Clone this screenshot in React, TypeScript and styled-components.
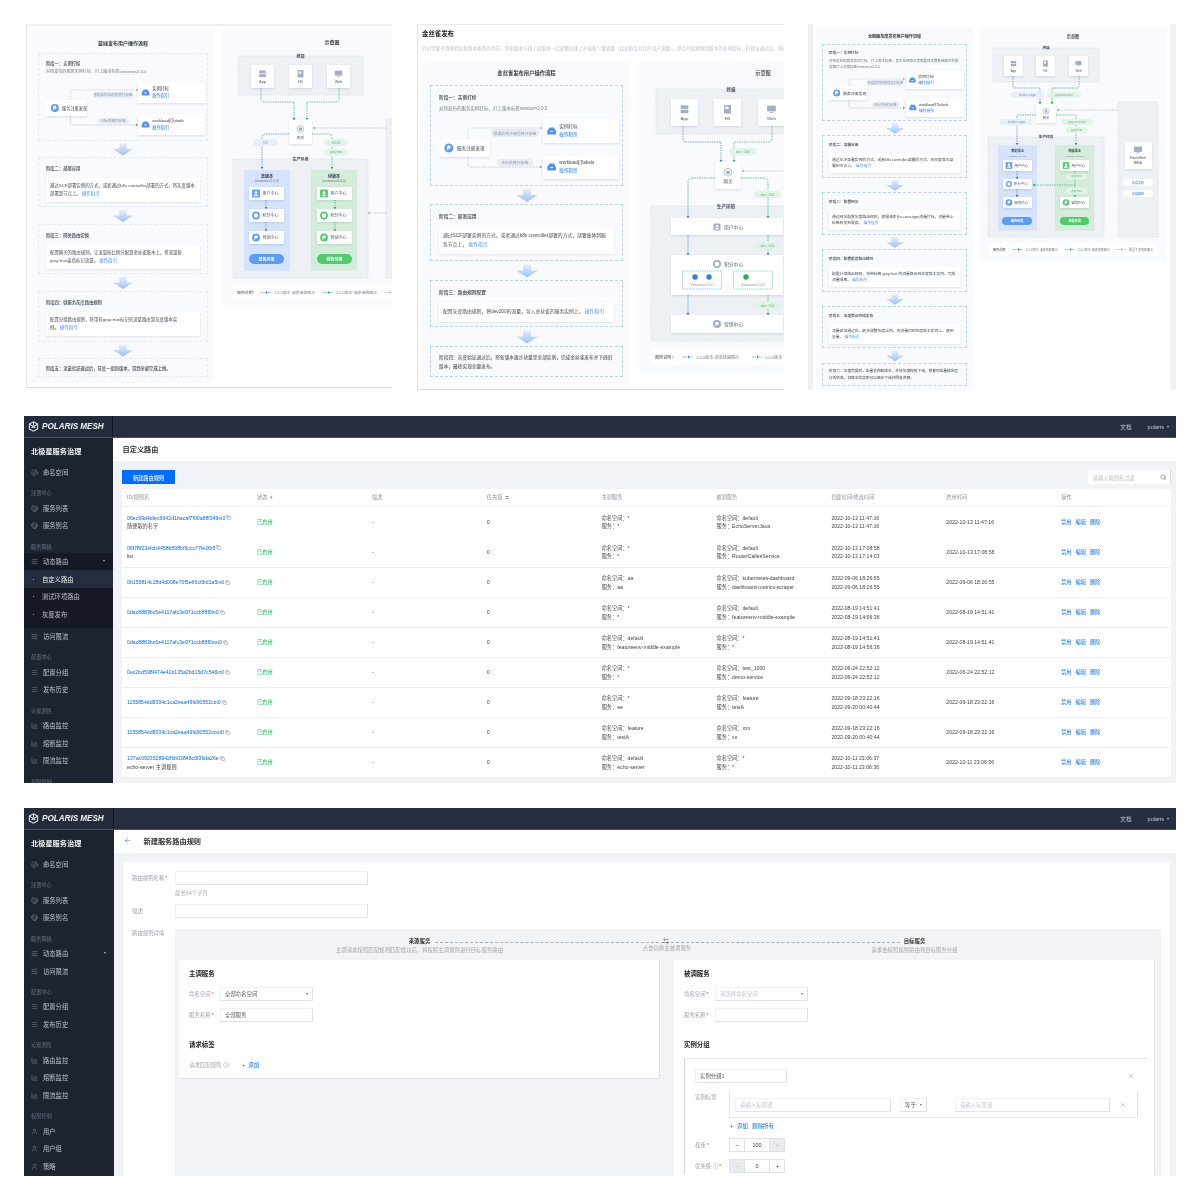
import React from "react";
import styled, { createGlobalStyle } from "styled-components";
import {
  ArrowLeft, ChartArea, Compass, Copy, Earth, Info, Menu, Minus, Plus, Search,
  SlidersHorizontal, User, X,
} from "lucide-react";

const FONT = `"Liberation Sans", "Noto Sans CJK SC", sans-serif`;
const BLUE = "#2f7df6";
const GREEN = "#1fb25b";
const GREY = "#aab4c6";

const GlobalStyle = createGlobalStyle`
  html, body { margin: 0; padding: 0; background: #fff; }
  body { font-family: ${FONT}; color: #333; }
  * { box-sizing: border-box; }
`;

const Page = styled.div`
  width: 1200px;
  padding: 24px 24px 0;
  display: grid;
  grid-template-rows: 367px 367px 368px;
  row-gap: 25px;
`;

const DocRow = styled.div`
  display: grid;
  grid-template-columns: repeat(3, 368px);
  column-gap: 24px;
  height: 366px;
`;

/* ---------- small drawing helpers used inside the diagrams ---------- */

const DiagramSvg = styled.svg`
  display: block;
  flex: none;
`;
const DiagramText = styled.text`
  font-family: ${FONT};
  dominant-baseline: central;
`;
const Raised = styled.rect`
  fill: #fff;
  filter: drop-shadow(0 1px 1.2px rgba(70, 90, 130, 0.18));
`;

type TProps = { x: number; y: number; s?: number; c?: string; w?: number; a?: "start" | "middle" | "end"; children: React.ReactNode };
const T = ({ x, y, s = 4, c = "#4f5866", w = 400, a = "start", children }: TProps) => (
  <DiagramText x={x} y={y} fontSize={s} fill={c} fontWeight={w} textAnchor={a}>{children}</DiagramText>
);

type WireProps = { d: string; c?: string; tip?: [number, number, "d" | "u" | "l" | "r"]; sw?: number };
const Wire = ({ d, c = BLUE, tip, sw = 0.7 }: WireProps) => {
  let head = "";
  if (tip) {
    const [x, y, dir] = tip;
    if (dir === "d") head = `${x - 1.5},${y - 2} ${x + 1.5},${y - 2} ${x},${y}`;
    if (dir === "u") head = `${x - 1.5},${y + 2} ${x + 1.5},${y + 2} ${x},${y}`;
    if (dir === "l") head = `${x + 2},${y - 1.5} ${x + 2},${y + 1.5} ${x},${y}`;
    if (dir === "r") head = `${x - 2},${y - 1.5} ${x - 2},${y + 1.5} ${x},${y}`;
  }
  return (
    <g>
      <path d={d} fill="none" stroke={c} strokeWidth={sw} strokeDasharray="1.4 1" />
      {tip && <polygon points={head} fill={c} />}
    </g>
  );
};

type GlyphKind = "app" | "h5" | "web" | "gw" | "user" | "ring" | "p" | "box" | "r";
const Glyph = ({ kind, x, y, s, c }: { kind: GlyphKind; x: number; y: number; s: number; c: string }) => (
  <g transform={`translate(${x - s / 2} ${y - s / 2}) scale(${s / 10})`}>
    {kind === "app" && (<><rect x="0.5" y="0.5" width="9" height="4" fill={c} /><rect x="0.5" y="5.5" width="9" height="4" fill={c} /></>)}
    {kind === "h5" && (<><rect x="1" y="0" width="8" height="10" fill={c} /><rect x="2.5" y="1.8" width="3.6" height="3" fill="#fff" /></>)}
    {kind === "web" && (<><rect x="0" y="0.8" width="10" height="6.6" fill={c} /><rect x="3" y="8" width="4" height="1.2" fill={c} /></>)}
    {kind === "gw" && (<><circle cx="5" cy="5" r="4.6" fill="none" stroke={c} strokeWidth="1" /><rect x="3" y="2.8" width="4" height="4.4" rx="0.8" fill={c} /></>)}
    {kind === "user" && (<><rect width="10" height="10" fill={c} /><circle cx="5" cy="3.8" r="1.8" fill="#fff" /><rect x="2.3" y="6.4" width="5.4" height="2" fill="#fff" /></>)}
    {kind === "ring" && (<><circle cx="5" cy="5" r="5" fill={c} /><circle cx="5" cy="5" r="2.8" fill="#fff" /></>)}
    {kind === "p" && (<><circle cx="5" cy="5" r="5" fill={c} /><rect x="3" y="2.5" width="4.2" height="3.4" rx="1.2" fill="#fff" /><rect x="3" y="5" width="1.2" height="2.8" fill="#fff" /></>)}
    {kind === "box" && (<><path d="M2.5 1 H7.5 L10 5 V9 H0 V5 Z" fill={c} /><rect x="3.2" y="5" width="3.6" height="1.2" fill="#fff" /></>)}
    {kind === "r" && (<><circle cx="5" cy="5" r="5" fill={c} /><circle cx="5" cy="4" r="2" fill="#fff" /><rect x="3" y="4" width="1.2" height="3.6" fill="#fff" /></>)}
  </g>
);

type TermBox = { x: number; y: number; w: number; h: number; kind: GlyphKind; label: string };
const TermNode = ({ n, s, c = "#a3aec2" }: { n: TermBox; s: number; c?: string }) => (
  <g>
    <Raised x={n.x} y={n.y} width={n.w} height={n.h} />
    <Glyph kind={n.kind} x={n.x + n.w / 2} y={n.y + n.h * 0.38} s={n.w * 0.32} c={c} />
    <T x={n.x + n.w / 2} y={n.y + n.h * 0.74} s={s} a="middle">{n.label}</T>
  </g>
);

const SvcRow = ({ x, y, w, h, kind, c, label, s, ix }: { x: number; y: number; w: number; h: number; kind: GlyphKind; c: string; label: string; s: number; ix: number }) => (
  <g>
    <Raised x={x} y={y} width={w} height={h} />
    <Glyph kind={kind} x={x + ix} y={y + h / 2} s={h * 0.6} c={c} />
    <T x={x + ix + h * 0.5} y={y + h / 2} s={s}>{label}</T>
  </g>
);

const Pill = ({ x, y, w, h, c, s, children }: { x: number; y: number; w: number; h: number; c: "blue" | "green" | "grey"; s: number; children: React.ReactNode }) => {
  const fill = { blue: "#e7effc", green: "#e2f4e8", grey: "#e6ebf4" }[c];
  const ink = { blue: "#6f93c9", green: "#6bb184", grey: "#8f9bb2" }[c];
  return (
    <g>
      <rect x={x} y={y} width={w} height={h} rx={h / 2} fill={fill} />
      <T x={x + w / 2} y={y + h / 2} s={s} c={ink} a="middle">{children}</T>
    </g>
  );
};

const Zone = ({ x, y, w, h, label, s = 4 }: { x: number; y: number; w: number; h: number; label?: string; s?: number }) => (
  <g>
    <rect x={x} y={y} width={w} height={h} fill="#edf1f5" stroke="#c9d1dd" strokeWidth="0.5" strokeDasharray="1.6 1.2" />
    {label && (<T x={x + w / 2} y={y} s={s} c="#444c5a" w={700} a="middle">{label}</T>)}
  </g>
);

const EnvColumn = ({ x, y, w, h, c, title, sub, s }: { x: number; y: number; w: number; h: number; c: "blue" | "green"; title: string; sub: string; s: number }) => (
  <g>
    <rect x={x} y={y} width={w} height={h} fill={c === "blue" ? "#d5e4fc" : "#d3edda"} />
    <T x={x + w / 2} y={y + 6} s={s} c="#39424f" w={700} a="middle">{title}</T>
    <T x={x + w / 2} y={y + 11} s={s - 0.7} c="#6c7685" a="middle">{sub}</T>
  </g>
);

const EnvButton = ({ x, y, w, h, c, s, children }: { x: number; y: number; w: number; h: number; c: string; s: number; children: React.ReactNode }) => (
  <g>
    <rect x={x} y={y} width={w} height={h} rx={h / 2} fill={c} />
    <T x={x + w / 2} y={y + h / 2} s={s} c="#fff" w={700} a="middle">{children}</T>
  </g>
);

const Legend = ({ x, y, w, h, s, stops, text }: { x: number; y: number; w: number; h: number; s: number; stops: number[]; text: string[] }) => {
  const cy = y + h / 2;
  const colors = [BLUE, GREEN, GREY];
  return (
    <g>
      <rect x={x} y={y} width={w} height={h} fill="#fff" />
      <T x={x + 4} y={cy} s={s} c="#444c5a">图例说明：</T>
      {stops.map((sx, i) => (
        <g key={sx}>
          <Wire d={`M${sx} ${cy} H${sx + 10}`} c={colors[i]} tip={[sx + 7, cy, "r"]} />
          <T x={sx + 13} y={cy} s={s} c="#7a8494">{text[i]}</T>
        </g>
      ))}
    </g>
  );
};

/* ---------- the three document screenshots ---------- */

const DocShot = styled.div<{ $kind: "a" | "b" | "c" }>`
  height: 366px;
  overflow: hidden;
  background: #fff;
  filter: blur(0.3px);
  ${(p) => p.$kind === "a" && `
    padding: 0 0 2px 2px;
  `}
  ${(p) => p.$kind === "b" && `
    padding: 0 0 0 1px;
  `}
  ${(p) => p.$kind === "c" && `
    background: #f0f1f5;
    padding: 0 6px 0 5px;
  `}
`;
const DocFrame = styled.div<{ $kind: "a" | "b" | "c" }>`
  height: 100%;
  background: #fff;
  overflow: hidden;
  ${(p) => p.$kind === "a" && `
    border-top: 2px solid #eef0f4;
    border-left: 1px solid #e3e6ec;
    border-bottom: 1px solid #d8dbe3;
    padding: 5px 0 0 4px;
  `}
  ${(p) => p.$kind === "b" && `
    border-top: 1px solid #e8eaf0;
    border-left: 1px solid #dfe2e9;
    border-bottom: 1px solid #d8dbe3;
    padding: 5px 0 0 4px;
  `}
  ${(p) => p.$kind === "c" && `
    padding: 3px 0 0 3px;
  `}
`;
const DocTitle = styled.div`
  font-size: 6.4px;
  line-height: 8px;
  font-weight: 700;
  color: #222;
`;
const DocIntro = styled.div`
  font-size: 4.6px;
  line-height: 8px;
  color: #bcc2cc;
  margin: 7px 0 8px;
  white-space: nowrap;
`;
const DocColumns = styled.div<{ $gap: number }>`
  display: flex;
  align-items: flex-start;
  gap: ${(p) => p.$gap}px;
`;
const FlowPanel = styled.div<{ $w: number; $h: number; $pad: number }>`
  width: ${(p) => p.$w}px;
  height: ${(p) => p.$h}px;
  flex: none;
  background: #f8fafe;
  padding: 0 ${(p) => p.$pad}px;
  overflow: hidden;
`;
const DiagramPanel = styled.div`
  flex: none;
  background: #f8fafe;
`;
const PanelTitle = styled.div<{ $h: number; $s: number }>`
  height: ${(p) => p.$h}px;
  display: flex;
  align-items: center;
  justify-content: center;
  font-size: ${(p) => p.$s}px;
  font-weight: 700;
  color: #30363f;
  white-space: nowrap;
`;
const Stage = styled.div<{ $h: number; $inset: number; $line: string }>`
  height: ${(p) => p.$h}px;
  border: 0.6px dashed ${(p) => p.$line};
  padding: 0 ${(p) => p.$inset}px;
  overflow: hidden;
`;
const StageTitle = styled.div<{ $h: number; $s: number }>`
  height: ${(p) => p.$h}px;
  display: flex;
  align-items: center;
  font-size: ${(p) => p.$s}px;
  color: #39404b;
  font-weight: 500;
  white-space: nowrap;
`;
const StageNote = styled.div<{ $s: number; $lh: number }>`
  height: 100%;
  display: flex;
  align-items: center;
  font-size: ${(p) => p.$s}px;
  line-height: ${(p) => p.$lh}px;
  color: #39404b;
`;
const StageDesc = styled.div<{ $s: number; $lh: number; $mt: number }>`
  font-size: ${(p) => p.$s}px;
  line-height: ${(p) => p.$lh}px;
  margin-top: ${(p) => p.$mt}px;
  color: #727b89;
`;
const StageCard = styled.div<{ $s: number; $lh: number; $py: number; $px: number }>`
  background: #fff;
  box-shadow: 0 1px 2px rgba(70, 90, 130, 0.14);
  padding: ${(p) => p.$py}px ${(p) => p.$px}px;
  font-size: ${(p) => p.$s}px;
  line-height: ${(p) => p.$lh}px;
  color: #424953;
`;
const GuideLink = styled.span`
  color: #3f8cf7;
  white-space: nowrap;
`;
const DownArrow = styled.svg<{ $h: number }>`
  display: block;
  margin: 0 auto;
  height: ${(p) => p.$h}px;
`;

const FlowArrow = ({ h, w }: { h: number; w: number }) => (
  <DownArrow $h={h} width={w} viewBox="0 0 24 16">
    <defs>
      <linearGradient id="flowArrowFill" x1="0" y1="0" x2="0" y2="1">
        <stop offset="0" stopColor="#e6eefc" />
        <stop offset="1" stopColor="#9fc0f8" />
      </linearGradient>
    </defs>
    <path d="M8 2 H16 V8 H23 L12 15 L1 8 H8 Z" fill="url(#flowArrowFill)" />
  </DownArrow>
);

type MiniGeo = {
  view: [number, number, number, number];
  node: [number, number, number, number];
  boxes: [number, number, number, number][];
  wireX: number; topY: number; botY: number; boxX: number;
  pills: [number, number, number, number][];
  s: number;
  labels: [string, string];
};
const MiniFlow = ({ g }: { g: MiniGeo }) => {
  const [nx, ny, nw, nh] = g.node;
  return (
    <DiagramSvg width={g.view[2]} height={g.view[3]} viewBox={g.view.join(" ")}>
      <Wire d={`M${g.wireX} ${ny} V${g.topY + 2} Q${g.wireX} ${g.topY} ${g.wireX + 2} ${g.topY} H${g.boxX}`} c={GREY} tip={[g.boxX, g.topY, "r"]} sw={0.5} />
      <Wire d={`M${g.wireX} ${ny + nh} V${g.botY - 2} Q${g.wireX} ${g.botY} ${g.wireX + 2} ${g.botY} H${g.boxX}`} c="#8d97aa" tip={[g.boxX, g.botY, "r"]} sw={0.5} />
      <Raised x={nx} y={ny} width={nw} height={nh} />
      <Glyph kind="r" x={nx + nh * 0.55} y={ny + nh / 2} s={nh * 0.5} c="#5f9df8" />
      <T x={nx + nh} y={ny + nh / 2} s={g.s} c="#3d4450">服务注册发现</T>
      {g.pills.map(([x, y, w, h], i) => (
        <Pill key={x} x={x} y={y} w={w} h={h} c="grey" s={g.s * 0.85}>{i === 0 ? "根据实例注册信息打标签" : "K8s资源打标签"}</Pill>
      ))}
      {g.boxes.map(([x, y, w, h], i) => (
        <g key={y}>
          <Raised x={x} y={y} width={w} height={h} />
          <Glyph kind="box" x={x + h * 0.36} y={y + h / 2} s={h * 0.36} c="#4e93f6" />
          <T x={x + h * 0.68} y={y + h * 0.33} s={g.s} c="#3d4450">{g.labels[i]}</T>
          <T x={x + h * 0.68} y={y + h * 0.66} s={g.s} c="#3f8cf7" w={500}>操作指引</T>
        </g>
      ))}
    </DiagramSvg>
  );
};

type StageData = { h: number; title: string; titleH?: number; desc?: string; descLh?: number; descMt?: number; mini?: MiniGeo; card?: string; noteLh?: number; };
type StagedFlowProps = { stages: StageData[]; gaps: number[]; pad: number; line: string; titleS: number; cardS: number; cardLh: number; cardPy: number; cardPx: number; titleH: number; arrowW: number };

const StagedFlow = ({ stages, gaps, pad, line, titleS, cardS, cardLh, cardPy, cardPx, titleH, arrowW }: StagedFlowProps) => (
  <>
    {stages.map((st, i) => (
      <React.Fragment key={st.title}>
        <Stage $h={st.h} $inset={pad} $line={line}>
          {st.noteLh ? (
            <StageNote $s={titleS} $lh={st.noteLh}>{st.title}</StageNote>
          ) : (
            <StageTitle $h={st.titleH ?? titleH} $s={titleS}>{st.title}</StageTitle>
          )}
          {st.desc && <StageDesc $s={cardS - 0.3} $lh={st.descLh ?? cardLh} $mt={st.descMt ?? 0}>{st.desc}</StageDesc>}
          {st.mini && <MiniFlow g={st.mini} />}
          {st.card && (
            <StageCard $s={cardS} $lh={cardLh} $py={cardPy} $px={cardPx}>
              {st.card}<GuideLink> 操作指引</GuideLink>
            </StageCard>
          )}
        </Stage>
        {i < stages.length - 1 && <FlowArrow h={gaps[i]} w={arrowW} />}
      </React.Fragment>
    ))}
  </>
);

const blueGreenStages: StageData[] = [
  {
    h: 88, title: "阶段一：实例打标", titleH: 17, desc: "对待发布的服务实例打标，打上版本标签version=v2.0.0", descLh: 6, descMt: -2,
    mini: {
      view: [45, 74, 160, 65], node: [45, 99, 41, 16], boxes: [[137, 81, 67, 21], [137, 113, 67, 21]],
      wireX: 69.5, topY: 89, botY: 124, boxX: 137, pills: [[92, 91, 40, 6], [97, 117, 31, 6]], s: 4.2,
      labels: ["实例打标", "workload打labels"],
    },
  },
  { h: 50, title: "阶段二：部署应用", card: "通过SCF部署实例的方式，或者通过k8s controller部署的方式，将灰度版本部署到节点上。" },
  { h: 50, title: "阶段三：网关路由切换", card: "配置网关的路由规则，让流量按比例分配到金丝雀版本上，将流量按gray:true染色标记流量。" },
  { h: 51, title: "阶段四：微服务灰度路由规则", card: "配置分组路由规则，将带有gray:true标记的流量路由到灰度版本实例。" },
  { h: 19, title: "阶段五：流量验证通过后，灰度一组新版本，直到全部完成上线。", titleH: 18 },
];

const canaryStages: StageData[] = [
  {
    h: 101, title: "阶段一：实例打标", desc: "对待发布的服务实例打标，打上版本标签version=2.0.0", descLh: 8, descMt: -3,
    mini: {
      view: [438, 112, 182, 70], node: [438, 138, 51, 18], boxes: [[542, 118, 76, 24], [542, 154, 76, 24]],
      wireX: 467, topY: 127, botY: 166, boxX: 541, pills: [[490, 128, 48, 8], [496, 158, 36, 7]], s: 4.6,
      labels: ["实例打标", "workload打labels"],
    },
  },
  { h: 57, title: "阶段二：部署应用", card: "通过SCF部署实例的方式，或者通过k8s controller部署的方式，部署集体到服务节点上，" },
  { h: 47, title: "阶段三：路由规则配置", card: "配置灰度路由规则，将dev200的流量，导入金丝雀的服务实例上。" },
  { h: 31, title: "阶段四：灰度验证通过后，将新版本逐步放量至全部实例，完成金丝雀发布并下线旧版本，最终实现全量发布。", noteLh: 9 },
];

const chainStages: StageData[] = [
  {
    h: 77, title: "阶段一：实例打标", titleH: 15, desc: "对待发布的服务实例打标，打上版本标签，其中全链路灰度需要保证整条链路中的服务都打上灰度标签version=v2.0.0", descLh: 6, descMt: -2,
    mini: {
      view: [829, 70, 136, 49], node: [829, 86, 38, 14], boxes: [[906, 71, 58, 18], [906, 98, 58, 19]],
      wireX: 849, topY: 79, botY: 108, boxX: 905, pills: [[868, 80, 35, 5.5], [872, 102, 27, 5.5]], s: 3.9,
      labels: ["实例打标", "workload打labels"],
    },
  },
  { h: 43, title: "阶段二：部署应用", card: "通过SCF部署实例的方式，或者k8s controller部署的方式，将灰度版本部署到节点上。" },
  { h: 43, title: "阶段三：配置网关", card: "通过网关配置灰度路由规则，根据请求头x-user-type流量打标，流量带上标签转发到服务。" },
  { h: 43, title: "阶段四：配置服务路由规则", card: "配置分组路由规则，将带标签 gray:true 的流量路由到灰度版本实例，完成流量隔离。" },
  { h: 42, title: "阶段五：灰度验证完成发布", card: "流量验证通过后，逐步调整灰度比例，将流量切到灰度版本实例上，直到全量。" },
  { h: 23, title: "阶段六：灰度完成后，全量发布新版本，并将灰度规则下线，恢复到全量稳定运行的状态，旧版本的实例可以逐步下线并回收资源。", noteLh: 6.5 },
];

const BlueGreenDiagram = () => (
  <DiagramSvg width={170} height={276} viewBox="222 31 170 276">
    <T x={332} y={42} s={5} c="#30363f" w={700} a="middle">示意图</T>
    <Zone x={238} y={56} w={125} h={39} label="终端" />
    {[{ x: 251, k: "app", l: "App" }, { x: 289, k: "h5", l: "H5" }, { x: 327, k: "web", l: "Web" }].map((n) => (
      <TermNode key={n.l} n={{ x: n.x, y: 65, w: 23, h: 23, kind: n.k as GlyphKind, label: n.l }} s={3.8} />
    ))}
    <Zone x={233} y={159} w={135} h={119} label="生产环境" />
    <Zone x={386} y={119} w={20} h={159} />
    <Wire d="M261 88 V98 Q261 102 265 102 H294 V120" tip={[294, 120, "d"]} />
    <Wire d="M339 88 V98 Q339 102 335 102 H307 V120" c={GREEN} tip={[307, 120, "d"]} />
    <Wire d="M289 134 H266 Q262 134 262 138 V169" tip={[262, 169, "d"]} />
    <Wire d="M312 134 H328 Q332 134 332 138 V169" c={GREEN} tip={[332, 169, "d"]} />
    <Wire d="M386 128 H313" c={GREY} tip={[313, 128, "l"]} />
    <Wire d="M386 213 H368" c={GREY} tip={[368, 213, "l"]} />
    <TermNode n={{ x: 289, y: 120, w: 23, h: 24, kind: "gw", label: "网关" }} s={3.8} />
    <Pill x={253} y={139} w={25} h={7} c="blue" s={3.4}>5%</Pill>
    <Pill x={324} y={139} w={24} h={7} c="green" s={3.4}>100%</Pill>
    <Pill x={324} y={149} w={24} h={6.5} c="green" s={3.2}>gray:true</Pill>
    <EnvColumn x={244} y={170} w={46} h={101} c="blue" title="蓝版本" sub="(version=v1.0.0)" s={4} />
    <EnvColumn x={311} y={170} w={46} h={101} c="green" title="绿版本" sub="(version=v2.0.0)" s={4} />
    <Wire d="M266 200 V209" tip={[266, 209, "d"]} />
    <Wire d="M266 222 V231" tip={[266, 231, "d"]} />
    <Wire d="M335 200 V209" c={GREEN} tip={[335, 209, "d"]} />
    <Wire d="M335 222 V231" c={GREEN} tip={[335, 231, "d"]} />
    <SvcRow x={249} y={187} w={35} h={13} kind="user" c="#5f9df8" label="用户中心" s={4} ix={7} />
    <SvcRow x={249} y={209} w={35} h={13} kind="ring" c="#5f9df8" label="积分中心" s={4} ix={7} />
    <SvcRow x={249} y={231} w={35} h={13} kind="p" c="#5f9df8" label="营销中心" s={4} ix={7} />
    <SvcRow x={317} y={187} w={35} h={13} kind="user" c="#4fcb6d" label="用户中心" s={4} ix={7} />
    <SvcRow x={317} y={209} w={35} h={13} kind="ring" c="#4fcb6d" label="积分中心" s={4} ix={7} />
    <SvcRow x={317} y={231} w={35} h={13} kind="p" c="#4fcb6d" label="营销中心" s={4} ix={7} />
    <EnvButton x={249} y={254} w={35} h={10} c="#5b9cf5" s={4}>蓝色环境</EnvButton>
    <EnvButton x={317} y={254} w={35} h={10} c="#4fcb6d" s={4}>绿色环境</EnvButton>
    <Legend x={233} y={285} w={165} h={15} s={3.9} stops={[261, 323, 384]} text={["1.0.0版本·请求链路图示", "2.0.0版本·请求链路图示", "配置下发"]} />
  </DiagramSvg>
);

const CanaryDiagram = () => (
  <DiagramSvg width={145} height={312} viewBox="639 61 145 312">
    <T x={763} y={73} s={5.2} c="#30363f" w={500} a="middle">示意图</T>
    <Zone x={656} y={89} w={150} h={45} label="终端" s={4.4} />
    {[{ x: 671, k: "app", l: "App" }, { x: 714, k: "h5", l: "H5" }, { x: 758, k: "web", l: "Web" }].map((n) => (
      <TermNode key={n.l} n={{ x: n.x, y: 99, w: 27, h: 27, kind: n.k as GlyphKind, label: n.l }} s={4.4} />
    ))}
    <Zone x={651} y={206} w={150} h={135} label="生产环境" s={4.6} />
    <Wire d="M683 126 V138 Q683 142 687 142 H721 V162" tip={[721, 162, "d"]} />
    <Wire d="M772 126 V138 Q772 142 768 142 H734 V162" c={GREEN} tip={[734, 162, "d"]} />
    <Wire d="M715 178 H692 Q688 178 688 182 V218" tip={[688, 218, "d"]} />
    <Wire d="M741 178 H764 Q768 178 768 182 V218" c={GREEN} tip={[768, 218, "d"]} />
    <Wire d="M790 171 H742" c={GREY} tip={[742, 171, "l"]} />
    <Wire d="M688 235 V255" tip={[688, 255, "d"]} />
    <Wire d="M768 235 V255" c={GREEN} tip={[768, 255, "d"]} />
    <Wire d="M688 295 V315" tip={[688, 315, "d"]} />
    <Wire d="M768 295 V315" c={GREEN} tip={[768, 315, "d"]} />
    <TermNode n={{ x: 715, y: 162, w: 26, h: 27, kind: "gw", label: "网关" }} s={4.4} />
    <Pill x={729} y={148} w={28} h={7} c="green" s={3.6}>dev: 200</Pill>
    <Pill x={754} y={191} w={27} h={7} c="green" s={3.6}>dev: 200</Pill>
    <Pill x={754} y={242} w={27} h={7} c="green" s={3.6}>dev: 200</Pill>
    <Pill x={754} y={302} w={27} h={7} c="green" s={3.6}>dev: 200</Pill>
    <Raised x={671} y={218} width={112} height={17} />
    <Glyph kind="user" x={717} y={227} s={7} c="#a3aec2" />
    <T x={724} y={227} s={4.8}>用户中心</T>
    <Raised x={671} y={255} width={112} height={40} />
    <Glyph kind="ring" x={717} y={264} s={8} c="#a3aec2" />
    <T x={724} y={264} s={4.8}>积分中心</T>
    <rect x={682.5} y={271} width={39} height={18} fill="none" stroke={BLUE} strokeWidth={0.5} strokeDasharray="1.2 1" />
    <circle cx={695} cy={277} r={2.7} fill={BLUE} />
    <circle cx={709} cy={277} r={2.7} fill={BLUE} />
    <T x={702} y={285} s={3.8} c="#8d97a6" a="middle">Version=1.0.0</T>
    <rect x={733.5} y={271} width={39} height={18} fill="none" stroke={GREEN} strokeWidth={0.5} strokeDasharray="1.2 1" />
    <circle cx={746} cy={277} r={2.7} fill={GREEN} />
    <T x={753} y={285} s={3.8} c="#8d97a6" a="middle">Version=2.0.0</T>
    <Raised x={671} y={315} width={112} height={18} />
    <Glyph kind="p" x={717} y={324} s={8} c="#a3aec2" />
    <T x={724} y={324} s={4.8}>营销中心</T>
    <Legend x={651} y={349} w={133} h={16} s={4.1} stops={[683, 752]} text={["1.0.0版本·请求链路图示", "2.0.0版本·请求链路图示"]} />
  </DiagramSvg>
);

const ChainDiagram = () => (
  <DiagramSvg width={187} height={235} viewBox="980 27 187 235">
    <T x={1073} y={36} s={4.2} c="#30363f" w={500} a="middle">示意图</T>
    <Zone x={993} y={48} w={106} h={34} label="终端" s={3.6} />
    {[{ x: 1004, k: "app", l: "App" }, { x: 1036, k: "h5", l: "H5" }, { x: 1069, k: "web", l: "Web" }].map((n) => (
      <TermNode key={n.l} n={{ x: n.x, y: 56, w: 19, h: 20, kind: n.k as GlyphKind, label: n.l }} s={3} />
    ))}
    <Zone x={988} y={137} w={116} h={100} label="生产环境" s={3.6} />
    <Zone x={1118} y={102} w={40} h={135} />
    <Wire d="M1013 76 V86 Q1013 88 1015 88 H1040 V104" tip={[1040, 104, "d"]} />
    <Wire d="M1079 76 V86 Q1079 88 1077 88 H1052 V104" c={GREEN} tip={[1052, 104, "d"]} />
    <Wire d="M1036 115 H1019 Q1017 115 1017 117 V145" tip={[1017, 145, "d"]} />
    <Wire d="M1056 115 H1074 Q1076 115 1076 117 V145" c={GREEN} tip={[1076, 145, "d"]} />
    <Wire d="M1118 110 H1057" c={GREY} tip={[1057, 110, "l"]} />
    <TermNode n={{ x: 1036, y: 104, w: 20, h: 19, kind: "gw", label: "网关" }} s={3.2} />
    <Pill x={1011} y={92} w={33} h={6} c="blue" s={2.8}>header:x-type</Pill>
    <Pill x={1047} y={92} w={34} h={6} c="green" s={2.8}>gray:user-true</Pill>
    <Pill x={1000} y={119} w={33} h={6} c="blue" s={2.8}>header:x-type</Pill>
    <Pill x={1061} y={119} w={32} h={6} c="green" s={2.8}>gray:user-true</Pill>
    <Pill x={1066} y={127} w={21} h={6} c="green" s={2.8}>gray:true</Pill>
    <EnvColumn x={998} y={145} w={39} h={86} c="blue" title="稳定版本" sub="(version=v1.0.0)" s={3.2} />
    <EnvColumn x={1055} y={145} w={39} h={86} c="green" title="灰度版本" sub="(version=v2.0.0)" s={3.2} />
    <Wire d="M1017 171 V179" tip={[1017, 179, "d"]} />
    <Wire d="M1017 189 V197" tip={[1017, 197, "d"]} />
    <Wire d="M1075 171 V197" c={GREEN} tip={[1075, 197, "d"]} />
    <Wire d="M1075 185 H1033" c={GREEN} tip={[1033, 185, "l"]} />
    <SvcRow x={1003} y={160} w={29} h={11} kind="user" c="#5f9df8" label="用户中心" s={3.4} ix={6} />
    <SvcRow x={1003} y={179} w={29} h={10} kind="ring" c="#5f9df8" label="积分中心" s={3.4} ix={6} />
    <SvcRow x={1003} y={197} w={29} h={11} kind="p" c="#5f9df8" label="营销中心" s={3.4} ix={6} />
    <SvcRow x={1060} y={160} w={29} h={11} kind="user" c="#4fcb6d" label="用户中心" s={3.4} ix={6} />
    <SvcRow x={1060} y={197} w={29} h={11} kind="p" c="#4fcb6d" label="营销中心" s={3.4} ix={6} />
    <Pill x={1066} y={174} w={21} h={5.5} c="green" s={2.6}>gray:true</Pill>
    <Pill x={1066} y={188} w={21} h={6} c="green" s={2.6}>gray:true</Pill>
    <EnvButton x={1002} y={217} w={30} h={8} c="#5b9cf5" s={3.2}>基线环境</EnvButton>
    <EnvButton x={1060} y={217} w={29} h={8} c="#4fcb6d" s={3.2}>灰度环境</EnvButton>
    <Raised x={1125} y={142} width={27} height={27} />
    <Glyph kind="web" x={1138} y={150} s={8} c="#a3aec2" />
    <T x={1138} y={158} s={3} c="#444c5a" a="middle">PolarisMesh</T>
    <T x={1138} y={163} s={3} c="#444c5a" a="middle">控制台</T>
    <rect x={1123} y={179} width={30} height={7} rx={3.5} fill="#fff" />
    <T x={1138} y={182.5} s={3} c="#5f9df8" w={700} a="middle">灰度发布</T>
    <rect x={1123} y={190} width={30} height={7} rx={3.5} fill="#fff" />
    <T x={1138} y={193.5} s={3} c="#5f9df8" w={700} a="middle">灰度规则</T>
    <Legend x={989} y={243} w={168} h={13} s={3} stops={[1013, 1065, 1116]} text={["1.0.0版本·请求链路图示", "2.0.0版本·请求链路图示", "配置下发链路图示"]} />
  </DiagramSvg>
);

/* ---------- console screenshots ---------- */

const ConsoleFrame = styled.div`
  display: flex;
  flex-direction: column;
  overflow: hidden;
  background: #f2f3f7;
  filter: blur(0.25px);
`;
const TopBar = styled.div`
  height: 22px;
  flex: none;
  background: #272e3f;
  border-bottom: 1px solid #4a5160;
  display: flex;
  align-items: center;
  color: #c4c8d0;
  font-size: 5.6px;
`;
const LogoSlot = styled.div<{ $w: number }>`
  width: ${(p) => p.$w}px;
  height: 100%;
  flex: none;
  border-right: 1px solid #12151e;
  background: #252b3b;
  display: flex;
  align-items: center;
  gap: 3px;
  padding-left: 4px;
`;
const LogoText = styled.span`
  font-size: 8.2px;
  font-weight: 700;
  font-style: italic;
  letter-spacing: -0.05px;
  color: #f0f2f5;
  white-space: nowrap;
`;
const TopLinks = styled.div`
  margin-left: auto;
  display: flex;
  align-items: center;
  padding-right: 7px;
  gap: 16px;
`;
const Caret = styled.span`
  display: inline-block;
  border: 1.5px solid transparent;
  border-top: 2px solid currentColor;
  border-bottom: 0;
  margin-left: 3px;
  vertical-align: middle;
`;
const ConsoleBody = styled.div`
  flex: 1;
  min-height: 0;
  display: flex;
`;
const Sidebar = styled.div<{ $w: number }>`
  width: ${(p) => p.$w}px;
  flex: none;
  background: #1e2332;
  overflow: hidden;
`;
const SideHead = styled.div`
  height: 25.5px;
  padding: 0 0 0 7px;
  display: flex;
  align-items: center;
  font-size: 7.2px;
  font-weight: 700;
  color: #f2f4f7;
`;
const SideSection = styled.div`
  height: 18.2px;
  padding: 0 0 3px 7px;
  display: flex;
  align-items: flex-end;
  font-size: 5.2px;
  color: #6c7282;
`;
const SideItem = styled.div<{ $tone?: "open" | "active" | "sub" }>`
  height: 17.6px;
  display: flex;
  align-items: center;
  gap: 5px;
  padding-left: 7px;
  font-size: 6.3px;
  color: #bcc0c9;
  background: ${(p) => (p.$tone === "open" || p.$tone === "sub" ? "#151825" : p.$tone === "active" ? "#242c3d" : "transparent")};
  ${(p) => p.$tone === "active" && "color: #eceef1;"}
  svg { flex: none; color: #8f95a1; }
`;
const SubDot = styled.span`
  width: 1px;
  height: 1px;
  margin: 0 3px 0 2px;
  background: #9aa0aa;
  flex: none;
`;
const SideFoot = styled.div`
  height: 4.5px;
  background: #151825;
`;
const SideCaret = styled(Caret)`
  margin-left: auto;
  margin-right: 8px;
`;
const Main = styled.div`
  flex: 1;
  min-width: 0;
  display: flex;
  flex-direction: column;
`;
const TitleBar = styled.div`
  height: 23px;
  flex: none;
  background: #fff;
  display: flex;
  align-items: center;
  padding: 0 0 1.5px 9.5px;
  font-size: 7.2px;
  font-weight: 700;
  color: #333;
  gap: 13px;
`;
const ListArea = styled.div`
  flex: 1;
  min-height: 0;
  padding: 9px 5px 0 9px;
  overflow: hidden;
`;
const ListTools = styled.div`
  display: flex;
  justify-content: space-between;
  height: 14px;
  margin-bottom: 5px;
`;
const PrimaryButton = styled.div`
  width: 53px;
  background: #006eff;
  color: #f2f7ff;
  font-size: 5.2px;
  font-weight: 500;
  display: flex;
  align-items: center;
  justify-content: center;
`;
const SearchBox = styled.div`
  width: 83px;
  background: #fff;
  border-right: 1px solid #d8dce4;
  display: flex;
  align-items: center;
  justify-content: space-between;
  padding: 0 4px 0 5px;
  font-size: 5.2px;
  color: #bbb;
  svg { color: #666; }
`;
const TableWrap = styled.div`
  background: #fff;
`;
const TableRow = styled.div<{ $head?: boolean; $plain?: boolean; $tall?: boolean }>`
  display: grid;
  grid-template-columns: 130px repeat(8, 1fr);
  height: ${(p) => (p.$head ? "18px" : p.$tall ? "31px" : "30px")};
  border-bottom: ${(p) => (p.$plain ? "0" : "1px solid #eceef2")};
  font-size: 5.2px;
  line-height: 8.4px;
  color: ${(p) => (p.$head ? "#8e939c" : "#444")};
`;
const TableCell = styled.div`
  padding-left: 5px;
  display: flex;
  flex-direction: column;
  justify-content: center;
  white-space: nowrap;
  overflow: hidden;
`;
const HeadCell = styled(TableCell)`
  flex-direction: row;
  justify-content: flex-start;
  align-items: center;
  gap: 3px;
`;
const IdLink = styled.span`
  color: #006eff;
  display: flex;
  align-items: center;
  gap: 1px;
  svg { color: #777; flex: none; }
`;
const Enabled = styled.span`
  color: #0abf5b;
`;
const ActionLinks = styled.div`
  display: flex;
  gap: 4px;
  color: #006eff;
`;

const SIDE_ICON = 7;
type SideEntry = { t: "s"; l: string } | { t: "i"; l: string; icon: React.ElementType; tone?: "open"; caret?: boolean } | { t: "sub"; l: string; active?: boolean } | { t: "foot" };

const SideNav = ({ items, w }: { items: SideEntry[]; w: number }) => (
  <Sidebar $w={w}>
    <SideHead>北极星服务治理</SideHead>
    {items.map((it, i) => {
      if (it.t === "s") return <SideSection key={it.l}>{it.l}</SideSection>;
      if (it.t === "foot") return <SideFoot key={i} />;
      if (it.t === "sub") return <SideItem key={it.l} $tone={it.active ? "active" : "sub"}><SubDot />{it.l}</SideItem>;
      const Ico = it.icon;
      return (
        <SideItem key={it.l} $tone={it.tone}>
          <Ico size={SIDE_ICON} strokeWidth={1.4} />{it.l}
          {it.caret && <SideCaret />}
        </SideItem>
      );
    })}
  </Sidebar>
);

const Logo = () => (
  <svg width="11" height="11" viewBox="0 0 12 12" fill="none" stroke="#e8eaee" strokeWidth="1.1">
    <path d="M6 0.8 L10.5 3.4 V8.6 L6 11.2 L1.5 8.6 V3.4 Z" />
    <path d="M1.5 3.4 L8 7.4 M10.5 3.4 L4 7.4 M6 1 V5" />
  </svg>
);

const ConsoleShell = ({ sideW, side, children }: { sideW: number; side: SideEntry[]; children: React.ReactNode }) => (
  <ConsoleFrame>
    <TopBar>
      <LogoSlot $w={sideW}>
        <Logo />
        <LogoText>POLARIS MESH</LogoText>
      </LogoSlot>
      <TopLinks>
        <span>文档</span>
        <span>polaris<Caret /></span>
      </TopLinks>
    </TopBar>
    <ConsoleBody>
      <SideNav items={side} w={sideW} />
      <Main>{children}</Main>
    </ConsoleBody>
  </ConsoleFrame>
);

type RouteRow = { id: string; name?: string; src: [string, string]; dst: [string, string]; made: [string, string]; on: string };
const ROUTES: RouteRow[] = [
  { id: "06ec99d4dfec6642d1bacaf7f00a88f349in0", name: "随便取的名字", src: ["*", "*"], dst: ["default", "EchoServerJava"], made: ["2022-10-13 11:47:16", "2022-10-13 11:47:16"], on: "2022-10-13 11:47:16" },
  { id: "06f78f23efcb4458b598bf6ccc77fe2fb5", name: "lisi", src: ["*", "*"], dst: ["default", "RouterCalleeService"], made: ["2022-10-13 17:08:58", "2022-10-13 17:14:03"], on: "2022-10-13 17:08:58" },
  { id: "0b155814c28d4d008e70f5e66c6bd1a5in0", src: ["aa", "aa"], dst: ["kubernetes-dashboard", "dashboard-metrics-scraper"], made: ["2022-09-06 18:26:55", "2022-09-06 18:26:55"], on: "2022-09-06 18:26:55" },
  { id: "0dac8883bc6e4117afc3e971ccb88f0in0", src: ["*", "*"], dst: ["default", "featureenv-middle-example"], made: ["2022-08-19 14:51:41", "2022-08-19 14:56:36"], on: "2022-08-19 14:51:41" },
  { id: "0dac8883bc6e4117afc3e971ccb88f0out0", src: ["default", "featureenv-middle-example"], dst: ["*", "*"], made: ["2022-08-19 14:51:41", "2022-08-19 14:56:36"], on: "2022-08-19 14:51:41" },
  { id: "0ec2bd598f474e41b135a2bd15d7c546in0", src: ["*", "*"], dst: ["test_1000", "demo-service"], made: ["2022-06-24 22:52:12", "2022-06-24 22:52:12"], on: "2022-06-24 22:52:12" },
  { id: "1155854dd8034c1ca2eaa49fd90552cin0", src: ["*", "ee"], dst: ["feature", "testA"], made: ["2022-09-18 23:22:16", "2022-09-20 00:40:44"], on: "2022-09-18 23:22:16" },
  { id: "1155854dd8034c1ca2eaa49fd90552cout0", src: ["feature", "testA"], dst: ["xxx", "xx"], made: ["2022-09-18 23:22:16", "2022-09-20 00:40:44"], on: "2022-09-18 23:22:16" },
  { id: "137ac0923528942fbb03848c0f39da26e", name: "echo-server 主调规则", src: ["default", "echo-server"], dst: ["*", "*"], made: ["2022-10-11 23:06:37", "2022-10-11 23:06:36"], on: "2022-10-11 23:06:36" },
];

const ServiceCell = ({ v }: { v: [string, string] }) => (
  <TableCell>
    <span>命名空间：{v[0]}</span>
    <span>服务：{v[1]}</span>
  </TableCell>
);

const RouteList = () => (
  <ListArea>
    <ListTools>
      <PrimaryButton>新建路由规则</PrimaryButton>
      <SearchBox>请输入规则名过滤<Search size={6.5} /></SearchBox>
    </ListTools>
    <TableWrap>
      <TableRow $head>
        <HeadCell>ID/规则名</HeadCell>
        <HeadCell>状态 <span>▾</span></HeadCell>
        <HeadCell>描述</HeadCell>
        <HeadCell>优先级 <span>≑</span></HeadCell>
        <HeadCell>主调服务</HeadCell>
        <HeadCell>被调服务</HeadCell>
        <HeadCell>创建时间/修改时间</HeadCell>
        <HeadCell>启用时间</HeadCell>
        <HeadCell>操作</HeadCell>
      </TableRow>
      {ROUTES.map((r, i) => (
        <TableRow key={r.id} $plain={i === 0} $tall={i === 1}>
          <TableCell>
            <IdLink>{r.id}<Copy size={5} /></IdLink>
            {r.name && <span>{r.name}</span>}
          </TableCell>
          <TableCell><Enabled>已启用</Enabled></TableCell>
          <TableCell>-</TableCell>
          <TableCell>0</TableCell>
          <ServiceCell v={r.src} />
          <ServiceCell v={r.dst} />
          <TableCell><span>{r.made[0]}</span><span>{r.made[1]}</span></TableCell>
          <TableCell>{r.on}</TableCell>
          <TableCell><ActionLinks><span>禁用</span><span>编辑</span><span>删除</span></ActionLinks></TableCell>
        </TableRow>
      ))}
    </TableWrap>
  </ListArea>
);

const FormArea = styled.div`
  flex: 1;
  min-height: 0;
  padding: 9px 6px 0 9px;
  overflow: hidden;
`;
const FormCard = styled.div`
  background: #fff;
  height: 100%;
  padding: 9px 9px 0;
  font-size: 5.4px;
  box-shadow: 0 1px 2px rgba(50, 60, 90, 0.08);
  overflow: hidden;
`;
const FormRow = styled.div<{ $mb: number }>`
  display: flex;
  align-items: flex-start;
  margin-bottom: ${(p) => p.$mb}px;
`;
const FormLabel = styled.div<{ $w: number; $lh?: number }>`
  width: ${(p) => p.$w}px;
  flex: none;
  color: #9aa0aa;
  line-height: ${(p) => p.$lh ?? 14}px;
  white-space: nowrap;
`;
const Star = styled.span`
  color: #e54545;
  margin-left: 1px;
`;
const TextInput = styled.div<{ $w: number; $muted?: boolean }>`
  width: ${(p) => p.$w}px;
  height: 14px;
  flex: none;
  background: #fff;
  border: 1px solid #f0f1f4;
  border-bottom-color: #dfe2e9;
  border-right-color: #dfe2e9;
  padding: 0 4px;
  line-height: 12px;
  font-size: 5.4px;
  color: ${(p) => (p.$muted ? "#bfc3ca" : "#555")};
  display: flex;
  align-items: center;
  justify-content: space-between;
  white-space: nowrap;
`;
const OpSelect = styled(TextInput)`
  margin: 0 28px 0 9px;
`;
const HelpText = styled.div`
  color: #a8adb5;
  line-height: 10px;
  margin-top: 3px;
`;
const DetailBox = styled.div`
  flex: 1;
  min-width: 0;
  background: #f2f3f7;
  height: 260px;
  position: relative;
`;
const DetailHead = styled.div`
  height: 31px;
  display: flex;
  padding: 0 6px 0 4px;
  text-align: center;
`;
const DetailSide = styled.div`
  flex: 1;
  padding-top: 8px;
  line-height: 8.5px;
  color: #a3a8b0;
  white-space: nowrap;
  b { display: block; color: #333; font-weight: 700; }
`;
const DetailMid = styled.div`
  width: 14px;
  flex: none;
  white-space: nowrap;
  display: flex;
  justify-content: center;
  padding-top: 15px;
  line-height: 8px;
  color: #a3a8b0;
`;
const DashLine = styled.div`
  position: absolute;
  left: 260px;
  top: 13px;
  width: 465px;
  border-top: 0.6px dashed #a9aeb6;
`;
const SwapMark = styled.div`
  position: absolute;
  left: 488px;
  top: 9px;
  color: #666;
  font-size: 6px;
  line-height: 7px;
`;
const DetailPanels = styled.div`
  display: flex;
  gap: 14px;
  align-items: flex-start;
  padding: 0 6px 0 4px;
`;
const ServicePanel = styled.div<{ $h: number }>`
  flex: 1;
  min-width: 0;
  height: ${(p) => p.$h}px;
  background: #fff;
  padding: 10px 0 0 10px;
  border-right: 1px solid #dfe3ea;
  border-bottom: 1px solid #dfe3ea;
  overflow: hidden;
`;
const PanelHeading = styled.div<{ $mt?: number }>`
  font-size: 6.4px;
  line-height: 8px;
  font-weight: 700;
  color: #222;
  margin: ${(p) => p.$mt ?? 0}px 0 9px;
`;
const Caret2 = styled(Caret)`
  color: #666;
`;
const MatchRow = styled.div`
  display: flex;
  align-items: center;
  gap: 12px;
  line-height: 8px;
  color: #a3a8b0;
  margin-top: 12px;
  span { display: flex; align-items: center; gap: 2px; }
`;
const AddLink = styled.span`
  color: #006eff;
  svg { color: #666; }
`;
const GroupBox = styled.div`
  border-top: 1px solid #e4e6eb;
  border-left: 1px solid #cfd3da;
  width: 463px;
  padding: 10px 0 0 10px;
`;
const GroupHead = styled.div`
  display: flex;
  justify-content: space-between;
  align-items: center;
  padding-right: 13px;
  margin-bottom: 8px;
  svg { color: #666; }
`;
const TagRow = styled.div`
  display: flex;
  align-items: flex-start;
`;
const TagBox = styled.div`
  width: 409px;
  height: 27px;
  border-left: 1px solid #e4e6eb;
  border-right: 1px solid #dfe2e8;
  border-bottom: 1px solid #e4e6eb;
  padding: 7px 0 0 5px;
  display: flex;
  align-items: flex-start;
  svg { color: #666; margin: 4px 0 0 10px; }
`;
const TagAction = styled.div`
  margin: 4px 0 8px 34px;
  display: flex;
  gap: 3px;
  line-height: 8px;
  color: #006eff;
  align-items: center;
  svg { color: #555; }
`;
const StepRow = styled.div`
  display: flex;
  align-items: center;
  height: 14px;
  margin-bottom: 7px;
`;
const Stepper = styled.div`
  display: flex;
  width: 56px;
  height: 14px;
  border: 1px solid #dfe2e8;
`;
const StepBtn = styled.div<{ $off?: boolean }>`
  width: 14px;
  flex: none;
  display: flex;
  align-items: center;
  justify-content: center;
  background: ${(p) => (p.$off ? "#e9ebef" : "#fff")};
  color: ${(p) => (p.$off ? "#b5b9c1" : "#444")};
`;
const StepValue = styled.div`
  flex: 1;
  display: flex;
  align-items: center;
  justify-content: center;
  color: #333;
  border-left: 1px solid #dfe2e8;
  border-right: 1px solid #dfe2e8;
`;

const Field = ({ label, mb, w = 93, value, muted, select, lw = 31 }: { label: string; mb: number; w?: number; value?: string; muted?: boolean; select?: boolean; lw?: number }) => (
  <FormRow $mb={mb}>
    <FormLabel $w={lw}>{label}<Star>*</Star></FormLabel>
    <TextInput $w={w} $muted={muted}>{value}{select && <Caret2 />}</TextInput>
  </FormRow>
);

const RouteForm = () => (
  <FormArea>
    <FormCard>
      <FormRow $mb={6}>
        <FormLabel $w={43}>路由规则名称<Star>*</Star></FormLabel>
        <div>
          <TextInput $w={193} />
          <HelpText>最长64个字符</HelpText>
        </div>
      </FormRow>
      <FormRow $mb={11}>
        <FormLabel $w={43}>描述</FormLabel>
        <TextInput $w={193} />
      </FormRow>
      <FormRow $mb={0}>
        <FormLabel $w={43} $lh={8}>路由规则详情</FormLabel>
        <DetailBox>
          <DetailHead>
            <DetailSide><b>来源服务</b>主调请求按照匹配规则匹配成功后，将按照主调规则进行目标服务路由</DetailSide>
            <DetailMid>点击切换主被调服务</DetailMid>
            <DetailSide><b>目标服务</b>请求会按照规则路由到目标服务分组</DetailSide>
          </DetailHead>
          <DashLine />
          <SwapMark>⇆</SwapMark>
          <DetailPanels>
            <ServicePanel $h={119}>
              <PanelHeading>主调服务</PanelHeading>
              <Field label="命名空间" mb={7} value="全部命名空间" select />
              <Field label="服务名称" mb={0} value="全部服务" />
              <PanelHeading $mt={19}>请求标签</PanelHeading>
              <MatchRow>
                <span>请求匹配规则 <Info size={6} /></span>
                <AddLink><Plus size={5} />添加</AddLink>
              </MatchRow>
            </ServicePanel>
            <ServicePanel $h={240}>
              <PanelHeading>被调服务</PanelHeading>
              <Field label="命名空间" mb={7} value="请选择命名空间" muted select />
              <Field label="服务名称" mb={0} />
              <PanelHeading $mt={19}>实例分组</PanelHeading>
              <GroupBox>
                <GroupHead>
                  <TextInput $w={92}>实例分组1</TextInput>
                  <X size={6} strokeWidth={1.2} />
                </GroupHead>
                <TagRow>
                  <FormLabel $w={34} $lh={12}>实例标签</FormLabel>
                  <TagBox>
                    <TextInput $w={156} $muted>请输入标签键</TextInput>
                    <OpSelect $w={27}>等于<Caret2 /></OpSelect>
                    <TextInput $w={155} $muted>请输入标签值</TextInput>
                    <X size={6} strokeWidth={1.2} />
                  </TagBox>
                </TagRow>
                <TagAction><Plus size={5} />添加 <span>&nbsp;删除所有</span></TagAction>
                <StepRow>
                  <FormLabel $w={34}>权重<Star>*</Star></FormLabel>
                  <Stepper>
                    <StepBtn><Minus size={5} /></StepBtn>
                    <StepValue>100</StepValue>
                    <StepBtn $off><Plus size={5} /></StepBtn>
                  </Stepper>
                </StepRow>
                <StepRow>
                  <FormLabel $w={34}>优先级 ⓘ<Star>*</Star></FormLabel>
                  <Stepper>
                    <StepBtn $off><Minus size={5} /></StepBtn>
                    <StepValue>0</StepValue>
                    <StepBtn><Plus size={5} /></StepBtn>
                  </Stepper>
                </StepRow>
              </GroupBox>
            </ServicePanel>
          </DetailPanels>
        </DetailBox>
      </FormRow>
    </FormCard>
  </FormArea>
);

const commonTop: SideEntry[] = [
  { t: "i", l: "命名空间", icon: Compass },
  { t: "s", l: "注册中心" },
  { t: "i", l: "服务列表", icon: Earth },
  { t: "i", l: "服务别名", icon: Earth },
  { t: "s", l: "服务网格" },
];
const commonMid: SideEntry[] = [
  { t: "s", l: "配置中心" },
  { t: "i", l: "配置分组", icon: Menu },
  { t: "i", l: "发布历史", icon: Menu },
  { t: "s", l: "可观测性" },
  { t: "i", l: "路由监控", icon: ChartArea },
  { t: "i", l: "熔断监控", icon: ChartArea },
  { t: "i", l: "限流监控", icon: ChartArea },
  { t: "s", l: "权限控制" },
];
const listSide: SideEntry[] = [
  ...commonTop,
  { t: "i", l: "动态路由", icon: SlidersHorizontal, tone: "open", caret: true },
  { t: "sub", l: "自定义路由", active: true },
  { t: "sub", l: "测试环境路由" },
  { t: "sub", l: "灰度发布" },
  { t: "foot" },
  { t: "i", l: "访问限流", icon: SlidersHorizontal },
  ...commonMid,
];
const formSide: SideEntry[] = [
  ...commonTop,
  { t: "i", l: "动态路由", icon: SlidersHorizontal, caret: true },
  { t: "i", l: "访问限流", icon: SlidersHorizontal },
  ...commonMid,
  { t: "i", l: "用户", icon: User },
  { t: "i", l: "用户组", icon: User },
  { t: "i", l: "策略", icon: User },
];

export default function App() {
  return (
    <>
      <GlobalStyle />
      <Page>
        <DocRow>
          <DocShot $kind="a">
            <DocFrame $kind="a">
              <DocColumns $gap={7}>
                <FlowPanel $w={184} $h={352} $pad={7}>
                  <PanelTitle $h={22} $s={5}>蓝绿发布用户操作流程</PanelTitle>
                  <StagedFlow stages={blueGreenStages} gaps={[16, 17, 17, 16]} pad={7} line="#e3e9f5" titleS={4.3} cardS={4.4} cardLh={8} cardPy={4} cardPx={4} titleH={20} arrowW={22} />
                </FlowPanel>
                <DiagramPanel><BlueGreenDiagram /></DiagramPanel>
              </DocColumns>
            </DocFrame>
          </DocShot>
          <DocShot $kind="b">
            <DocFrame $kind="b">
              <DocTitle>金丝雀发布</DocTitle>
              <DocIntro>针对需要平滑地验证新版本服务的场景，将新版本与线上旧版本一起部署在线上并接收少量流量（比如按百分比的用户流量），然后持续观察新版本的各项指标，待验证通过后，再逐步放大</DocIntro>
              <DocColumns $gap={8}>
                <FlowPanel $w={209} $h={324} $pad={8}>
                  <PanelTitle $h={24} $s={5.3}>金丝雀发布用户操作流程</PanelTitle>
                  <StagedFlow stages={canaryStages} gaps={[18, 19, 19]} pad={8} line="#b9d2f8" titleS={4.7} cardS={4.8} cardLh={8.6} cardPy={5} cardPx={4} titleH={22} arrowW={24} />
                </FlowPanel>
                <DiagramPanel><CanaryDiagram /></DiagramPanel>
              </DocColumns>
            </DocFrame>
          </DocShot>
          <DocShot $kind="c">
            <DocFrame $kind="c">
              <DocColumns $gap={7}>
                <FlowPanel $w={157} $h={363} $pad={6}>
                  <PanelTitle $h={17} $s={4.1}>全链路灰度发布用户操作流程</PanelTitle>
                  <StagedFlow stages={chainStages} gaps={[14, 14, 14, 14, 15]} pad={6} line="#b9d2f8" titleS={3.7} cardS={3.8} cardLh={6.4} cardPy={3.5} cardPx={3} titleH={17} arrowW={20} />
                </FlowPanel>
                <DiagramPanel><ChainDiagram /></DiagramPanel>
              </DocColumns>
            </DocFrame>
          </DocShot>
        </DocRow>
        <ConsoleShell sideW={89} side={listSide}>
          <TitleBar>自定义路由</TitleBar>
          <RouteList />
        </ConsoleShell>
        <ConsoleShell sideW={90} side={formSide}>
          <TitleBar><ArrowLeft size={7} color="#006eff" strokeWidth={1.6} />新建服务路由规则</TitleBar>
          <RouteForm />
        </ConsoleShell>
      </Page>
    </>
  );
}
